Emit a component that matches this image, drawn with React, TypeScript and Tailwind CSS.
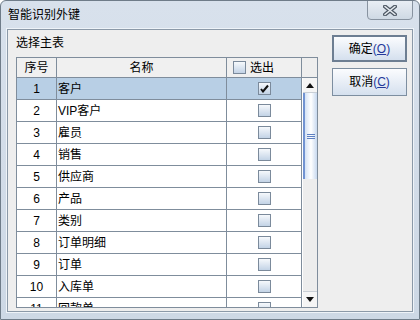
import type { ReactNode } from "react";

const rows = [
  { no: 1, name: "客户", checked: true },
  { no: 2, name: "VIP客户", checked: false },
  { no: 3, name: "雇员", checked: false },
  { no: 4, name: "销售", checked: false },
  { no: 5, name: "供应商", checked: false },
  { no: 6, name: "产品", checked: false },
  { no: 7, name: "类别", checked: false },
  { no: 8, name: "订单明细", checked: false },
  { no: 9, name: "订单", checked: false },
  { no: 10, name: "入库单", checked: false },
  { no: 11, name: "回款单", checked: false },
];

function CheckBox({ checked }: { checked?: boolean }) {
  return (
    <div className="w-[13px] h-[13px] border border-[#7b8a9b] bg-gradient-to-b from-[#f6f9fc] to-[#c3d3e6] flex items-center justify-center">
      {checked && (
        <svg width="9" height="9" viewBox="0 0 9 9">
          <path d="M1 5 L3 7.5 L8 1.5" fill="none" stroke="#111" strokeWidth="2" />
        </svg>
      )}
    </div>
  );
}

function DlgButton({ label, mnemonic, primary }: { label: string; mnemonic: string; primary?: boolean }) {
  return (
    <div
      className={`w-[75px] flex items-center justify-center bg-gradient-to-b from-[#fbfcfe] to-[#d5e0ee] text-[12px] text-black ${
        primary ? "h-[27px] border-2 border-[#6d7e92]" : "h-[28px] border border-[#7d8ea0]"
      }`}
    >
      <span>{label}</span>
      <span className="text-[#24389a]">
        (<span className="underline">{mnemonic}</span>)
      </span>
    </div>
  );
}

function Cell({ className, children }: { className: string; children?: ReactNode }) {
  return <div className={`h-full border-r border-[#7f8d9c] flex items-center ${className}`}>{children}</div>;
}

export default function App() {
  return (
    <div
      className="relative w-[420px] h-[320px] border border-[#6f7c89] rounded-t-[6px] bg-gradient-to-b from-[#d8e1ec] to-[#cdd8e5] flex flex-col overflow-hidden text-black"
      style={{ fontFamily: '"Liberation Sans", "Noto Sans CJK SC", sans-serif' }}
    >
      <div className="h-[28px] flex items-center pl-[7px] text-[12px] shrink-0">智能识别外键</div>

      <div className="absolute right-[6px] top-[-1px] w-[46px] h-[20px] rounded-b-[4px] border border-[#8893a0] bg-gradient-to-b from-[#e9eef4] to-[#cfd9e4] flex items-center justify-center">
        <svg width="14" height="11" viewBox="0 0 14 11">
          <path d="M2 1.5 L12 9.5 M12 1.5 L2 9.5" stroke="#4f5965" strokeWidth="4" strokeLinecap="round" />
          <path d="M2 1.5 L12 9.5 M12 1.5 L2 9.5" stroke="#e6ebf0" strokeWidth="1.6" strokeLinecap="round" />
        </svg>
      </div>

      <div className="flex-1 mx-[6px] mb-[7px] border border-[#8b99a8] shadow-[0_0_0_1px_#eef3f8] bg-[#eeeeee] flex pl-[8px] pt-[5px]">
        <div className="w-[302px] flex flex-col">
          <div className="h-[17px] leading-[17px] text-[12px] pl-[0px]">选择主表</div>
          <div className="mt-[5px] w-[302px] h-[251px] border border-[#7f8d9c] flex flex-col">
            <div className="h-[20px] flex border-b border-[#7f8d9c] bg-[#f0f0f0] text-[12px] shrink-0">
              <Cell className="w-[40px] justify-center">序号</Cell>
              <Cell className="w-[170px] justify-center">名称</Cell>
              <Cell className="w-[75px] pl-[6px] gap-[4px]">
                <CheckBox />
                <span>选出</span>
              </Cell>
              <div className="w-[15px] h-full bg-[#eeeeee]" />
            </div>
            <div className="flex-1 flex overflow-hidden">
              <div className="w-[285px] overflow-hidden">
                {rows.map((r) => (
                  <div
                    key={r.no}
                    className={`h-[22px] flex border-b border-[#7f8d9c] text-[12px] ${r.no === 1 ? "bg-[#b8cfe5]" : "bg-white"}`}
                  >
                    <Cell className="w-[40px] justify-center">{r.no}</Cell>
                    <Cell className="w-[170px] pl-[1px]">{r.name}</Cell>
                    <Cell className="w-[75px] justify-center">
                      <CheckBox checked={r.checked} />
                    </Cell>
                  </div>
                ))}
              </div>
              <div className="w-[15px] flex flex-col bg-[#ededed] border-l border-white">
                <div className="h-[15px] bg-[#f5f5f5] border-b border-[#c9cfd6] flex items-center justify-center shrink-0">
                  <svg width="8" height="5" viewBox="0 0 8 5">
                    <path d="M0 5 L4 0 L8 5 Z" fill="#111" />
                  </svg>
                </div>
                <div className="h-[86px] border-l-2 border-[#7193d2] bg-gradient-to-r from-[#d4e2f4] via-[#ffffff] to-[#c8d9ef] flex flex-col items-center justify-center gap-[1px] shrink-0">
                  <div className="w-[8px] h-px bg-[#5e80c2]" />
                  <div className="w-[8px] h-px bg-[#5e80c2]" />
                  <div className="w-[8px] h-px bg-[#5e80c2]" />
                </div>
                <div className="flex-1" />
                <div className="h-[16px] bg-[#f5f5f5] border-t border-[#c9cfd6] flex items-center justify-center shrink-0">
                  <svg width="8" height="5" viewBox="0 0 8 5">
                    <path d="M0 0 L8 0 L4 5 Z" fill="#111" />
                  </svg>
                </div>
              </div>
            </div>
          </div>
        </div>
        <div className="ml-[14px] flex flex-col gap-[6px]">
          <DlgButton label="确定" mnemonic="O" primary />
          <DlgButton label="取消" mnemonic="C" />
        </div>
      </div>
    </div>
  );
}
